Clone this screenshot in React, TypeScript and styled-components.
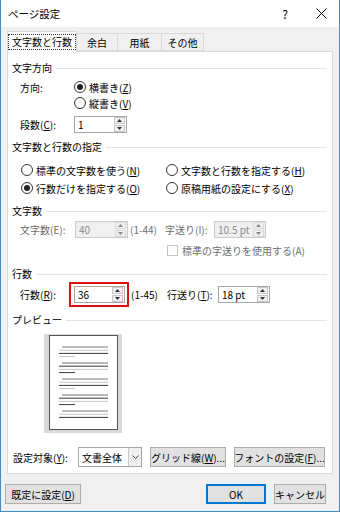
import React from 'react';
import styled, { createGlobalStyle } from 'styled-components';

const GlobalStyle = createGlobalStyle`
  html, body {
    margin: 0;
    padding: 0;
    background: #ffffff;
  }
  * {
    box-sizing: border-box;
  }
`;

const FONT = `"Noto Sans CJK JP", "Noto Sans", sans-serif`;

const Window = styled.div`
  width: 340px;
  height: 512px;
  display: flex;
  flex-direction: column;
  background: #f0f0f0;
  border-left: 1px solid #3d8fca;
  border-right: 1px solid #3d8fca;
  border-bottom: 1px solid #3d8fca;
  font-family: ${FONT};
  font-size: 10px;
  color: #000;
`;

const TitleBar = styled.div`
  height: 27px;
  background: #ffffff;
  display: flex;
  align-items: center;
  padding-left: 7px;
`;

const Title = styled.div`
  flex: 1;
  font-size: 10.5px;
`;

const TitleButton = styled.div`
  width: 36px;
  height: 27px;
  display: flex;
  align-items: center;
  justify-content: center;
  font-size: 12px;
`;

const Tabs = styled.div`
  display: flex;
  align-items: flex-end;
  margin: 4px 6px 0;
  height: 20px;
  position: relative;
  z-index: 1;
`;

const Tab = styled.div<{ $active?: boolean; $w: number }>`
  width: ${(p) => p.$w}px;
  height: ${(p) => (p.$active ? 21 : 18)}px;
  margin-bottom: ${(p) => (p.$active ? -1 : 0)}px;
  display: flex;
  align-items: center;
  justify-content: center;
  background: ${(p) => (p.$active ? '#ffffff' : '#f0f0f0')};
  border: 1px solid #d9d9d9;
  border-bottom: ${(p) => (p.$active ? 'none' : '1px solid #d9d9d9')};
  border-left: ${(p) => (p.$active ? '1px solid #d9d9d9' : 'none')};
  font-size: 10px;
`;

const TabFocus = styled.span`
  border: 1px dotted #333;
  padding: 0 3px;
  line-height: 14px;
`;

const Panel = styled.div`
  margin: 0 6px;
  width: 326px;
  height: 423px;
  background: #ffffff;
  border: 1px solid #d9d9d9;
  padding-top: 10px;
  display: flex;
  flex-direction: column;
`;

const SectionHeader = styled.div<{ $mt: number }>`
  display: flex;
  align-items: center;
  gap: 4px;
  height: 12px;
  margin: ${(p) => p.$mt}px 5px 0 4px;
  line-height: 12px;
  &::after {
    content: '';
    flex: 1;
    height: 1px;
    background: #e3e3e3;
  }
`;

const Row = styled.div<{ $mt: number; $h: number; $pl?: number }>`
  display: flex;
  align-items: center;
  height: ${(p) => p.$h}px;
  margin-top: ${(p) => p.$mt}px;
  padding-left: ${(p) => p.$pl ?? 12}px;
`;

const Cell = styled.div<{ $w: number; $disabled?: boolean }>`
  width: ${(p) => p.$w}px;
  flex-shrink: 0;
  white-space: nowrap;
  color: ${(p) => (p.$disabled ? '#6d6d6d' : '#000')};
`;

const Key = styled.span`
  text-decoration: underline;
  text-underline-offset: 1px;
`;

const RadioWrap = styled.label`
  display: flex;
  align-items: center;
  gap: 3px;
  white-space: nowrap;
`;

const RadioCircle = styled.span<{ $checked?: boolean }>`
  width: 12px;
  height: 12px;
  border-radius: 50%;
  border: 1px solid #333;
  background: #fff;
  display: flex;
  align-items: center;
  justify-content: center;
  &::after {
    content: '';
    width: 6px;
    height: 6px;
    border-radius: 50%;
    background: ${(p) => (p.$checked ? '#222' : 'transparent')};
  }
`;

const CheckBox = styled.span`
  width: 11px;
  height: 11px;
  border: 1px solid #c4c4c4;
  background: #fff;
  margin-right: 4px;
`;

const SpinBox = styled.div<{ $w: number; $disabled?: boolean }>`
  width: ${(p) => p.$w}px;
  height: 17px;
  border: 1px solid ${(p) => (p.$disabled ? '#cccccc' : '#a6a6a6')};
  background: ${(p) => (p.$disabled ? '#f0f0f0' : '#ffffff')};
  color: ${(p) => (p.$disabled ? '#8a8a8a' : '#000')};
  display: flex;
  align-items: center;
  flex-shrink: 0;
`;

const SpinValue = styled.div`
  flex: 1;
  padding-left: 3px;
  font-size: 10px;
`;

const SpinButtons = styled.div`
  width: 11px;
  height: 15px;
  display: flex;
  flex-direction: column;
  gap: 1px;
  margin-right: 1px;
`;

const SpinButton = styled.div<{ $disabled?: boolean }>`
  flex: 1;
  background: #efefef;
  border: 1px solid ${(p) => (p.$disabled ? '#dadada' : '#c8c8c8')};
  display: flex;
  align-items: center;
  justify-content: center;
`;

const RedFrame = styled.div`
  width: 60px;
  height: 25px;
  border: 2px solid #e01010;
  display: flex;
  align-items: center;
  padding-left: 3px;
  flex-shrink: 0;
`;

const PreviewBox = styled.div`
  margin: 8px 0 0 36px;
  width: 78px;
  height: 99px;
  background: #d9d9d9;
  display: flex;
  justify-content: center;
  padding-top: 1px;
`;

const Page = styled.div`
  width: 69px;
  height: 95px;
  background: #ffffff;
  border: 1px solid #555;
`;

const Select = styled.div`
  width: 64px;
  height: 20px;
  border: 1px solid #a6a6a6;
  background: #fff;
  display: flex;
  align-items: center;
  flex-shrink: 0;
`;

const SelectText = styled.div`
  flex: 1;
  padding-left: 3px;
`;

const SelectArrow = styled.div`
  width: 13px;
  height: 18px;
  border-left: 1px solid #c8c8c8;
  background: #f0f0f0;
  display: flex;
  align-items: center;
  justify-content: center;
`;

const Button = styled.div<{ $w: number; $ml?: number; $default?: boolean }>`
  width: ${(p) => p.$w}px;
  height: 20px;
  margin-left: ${(p) => p.$ml ?? 0}px;
  background: #e1e1e1;
  border: 1px solid ${(p) => (p.$default ? '#0078d7' : '#adadad')};
  box-shadow: ${(p) => (p.$default ? 'inset 0 0 0 1px #0078d7' : 'none')};
  display: flex;
  align-items: center;
  justify-content: center;
  white-space: nowrap;
  flex-shrink: 0;
`;

const Footer = styled.div`
  display: flex;
  align-items: center;
  margin-top: 10px;
  padding: 0 13px 0 4px;
`;

const Spacer = styled.div`
  flex: 1;
`;

const Arrow = ({ up, color = '#333' }: { up?: boolean; color?: string }) => (
  <svg width="5" height="3" viewBox="0 0 5 3">
    <path d={up ? 'M0 3 L2.5 0 L5 3 Z' : 'M0 0 L2.5 3 L5 0 Z'} fill={color} />
  </svg>
);

const Spinner = ({ value, w, disabled }: { value: string; w: number; disabled?: boolean }) => (
  <SpinBox $w={w} $disabled={disabled}>
    <SpinValue>{value}</SpinValue>
    <SpinButtons>
      <SpinButton $disabled={disabled}>
        <Arrow up color={disabled ? '#888' : '#333'} />
      </SpinButton>
      <SpinButton $disabled={disabled}>
        <Arrow color={disabled ? '#888' : '#333'} />
      </SpinButton>
    </SpinButtons>
  </SpinBox>
);

const Radio = ({ checked, children }: { checked?: boolean; children: React.ReactNode }) => (
  <RadioWrap>
    <RadioCircle $checked={checked} />
    <span>{children}</span>
  </RadioWrap>
);

// five paragraphs of dummy lines on the preview page
const paragraphs = [0, 1, 2, 3, 4];
const PreviewLines = () => (
  <svg width="67" height="93" viewBox="0 0 67 93">
    {paragraphs.map((p) => {
      const y0 = 11 + p * 16;
      const dark = p % 2 === 0;
      const a = dark ? '#3a3a3a' : '#c4c4c4';
      const b = dark ? '#c4c4c4' : '#3a3a3a';
      const lines = p === 4 ? 3 : 4;
      return Array.from({ length: lines }).map((_, i) => {
        const x1 = i === 0 ? 12 : 9;
        const x2 = i === 3 ? 25 : 58;
        const color = i % 2 === 0 ? a : b;
        return (
          <line
            key={`${p}-${i}`}
            x1={x1}
            x2={x2}
            y1={y0 + i * 3.2}
            y2={y0 + i * 3.2}
            stroke={i === 0 ? '#777' : color}
            strokeWidth="1"
          />
        );
      });
    })}
  </svg>
);

export default function App() {
  return (
    <>
      <GlobalStyle />
      <Window>
        <TitleBar>
          <Title>ページ設定</Title>
          <TitleButton>?</TitleButton>
          <TitleButton>
            <svg width="11" height="11" viewBox="0 0 11 11">
              <path d="M0.5 0.5 L10.5 10.5 M10.5 0.5 L0.5 10.5" stroke="#000" strokeWidth="1" />
            </svg>
          </TitleButton>
        </TitleBar>

        <Tabs>
          <Tab $active $w={70}>
            <TabFocus>文字数と行数</TabFocus>
          </Tab>
          <Tab $w={41}>余白</Tab>
          <Tab $w={44}>用紙</Tab>
          <Tab $w={42}>その他</Tab>
        </Tabs>

        <Panel>
          <SectionHeader $mt={0}>文字方向</SectionHeader>
          <Row $mt={5} $h={16}>
            <Cell $w={54}>方向:</Cell>
            <Radio checked>
              横書き(<Key>Z</Key>)
            </Radio>
          </Row>
          <Row $mt={0} $h={16} $pl={66}>
            <Radio>
              縦書き(<Key>V</Key>)
            </Radio>
          </Row>
          <Row $mt={4} $h={18}>
            <Cell $w={54}>
              段数(<Key>C</Key>):
            </Cell>
            <Spinner value="1" w={53} />
          </Row>

          <SectionHeader $mt={8}>文字数と行数の指定</SectionHeader>
          <Row $mt={9} $h={16} $pl={13}>
            <Cell $w={145}>
              <Radio>
                標準の文字数を使う(<Key>N</Key>)
              </Radio>
            </Cell>
            <Radio>
              文字数と行数を指定する(<Key>H</Key>)
            </Radio>
          </Row>
          <Row $mt={2} $h={16} $pl={13}>
            <Cell $w={145}>
              <Radio checked>
                行数だけを指定する(<Key>O</Key>)
              </Radio>
            </Cell>
            <Radio>
              原稿用紙の設定にする(<Key>X</Key>)
            </Radio>
          </Row>

          <SectionHeader $mt={9}>文字数</SectionHeader>
          <Row $mt={3} $h={19}>
            <Cell $w={55} $disabled>
              文字数(E):
            </Cell>
            <Spinner value="40" w={53} disabled />
            <Cell $w={37} $disabled style={{ paddingLeft: 2 }}>
              (1-44)
            </Cell>
            <Cell $w={49} $disabled>
              字送り(I):
            </Cell>
            <Spinner value="10.5 pt" w={52} disabled />
          </Row>
          <Row $mt={3} $h={16} $pl={159}>
            <CheckBox />
            <Cell $w={140} $disabled>
              標準の字送りを使用する(A)
            </Cell>
          </Row>

          <SectionHeader $mt={10}>行数</SectionHeader>
          <Row $mt={2} $h={25}>
            <Cell $w={49}>
              行数(<Key>R</Key>):
            </Cell>
            <RedFrame>
              <Spinner value="36" w={51} />
            </RedFrame>
            <Cell $w={38} style={{ paddingLeft: 2 }}>
              (1-45)
            </Cell>
            <Cell $w={51}>
              行送り(<Key>T</Key>):
            </Cell>
            <Spinner value="18 pt" w={52} />
          </Row>

          <SectionHeader $mt={7}>プレビュー</SectionHeader>
          <PreviewBox>
            <Page>
              <PreviewLines />
            </Page>
          </PreviewBox>

          <Row $mt={14} $h={20} $pl={5}>
            <Cell $w={65}>
              設定対象(<Key>Y</Key>):
            </Cell>
            <Select>
              <SelectText>文書全体</SelectText>
              <SelectArrow>
                <svg width="7" height="4" viewBox="0 0 7 4">
                  <path d="M0.5 0.5 L3.5 3.5 L6.5 0.5" fill="none" stroke="#444" strokeWidth="1" />
                </svg>
              </SelectArrow>
            </Select>
            <Button $w={76} $ml={8}>
              グリッド線(<Key>W</Key>)...
            </Button>
            <Button $w={91} $ml={8}>
              フォントの設定(<Key>F</Key>)...
            </Button>
          </Row>
        </Panel>

        <Footer>
          <Button $w={76}>
            既定に設定(<Key>D</Key>)
          </Button>
          <Spacer />
          <Button $w={60} $default>
            OK
          </Button>
          <Button $w={52} $ml={8}>
            キャンセル
          </Button>
        </Footer>
      </Window>
    </>
  );
}
